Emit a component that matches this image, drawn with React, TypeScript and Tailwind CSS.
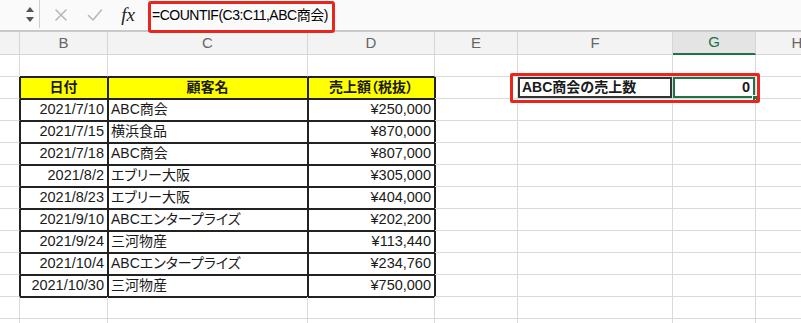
import React from "react";

const W = [
  "w-[20px]",
  "w-[88px]",
  "w-[200px]",
  "w-[127px]",
  "w-[83px]",
  "w-[155px]",
  "w-[83px]",
  "w-[83px]",
];

const LETTERS = ["", "B", "C", "D", "E", "F", "G", "H"];

const HEAD = ["日付", "顧客名", "売上額（税抜）"];

const DATA: [string, string, string][] = [
  ["2021/7/10", "ABC商会", "¥250,000"],
  ["2021/7/15", "横浜食品", "¥870,000"],
  ["2021/7/18", "ABC商会", "¥807,000"],
  ["2021/8/2", "エブリー大阪", "¥305,000"],
  ["2021/8/23", "エブリー大阪", "¥404,000"],
  ["2021/9/10", "ABCエンタープライズ", "¥202,200"],
  ["2021/9/24", "三河物産", "¥113,440"],
  ["2021/10/4", "ABCエンタープライズ", "¥234,760"],
  ["2021/10/30", "三河物産", "¥750,000"],
];

function cellClass(r: number, c: number): string {
  const parts: string[] = [
    W[c],
    "h-full shrink-0 border-r border-b flex items-center overflow-hidden whitespace-nowrap",
  ];
  const inTableRow = r >= 2 && r <= 11;
  const rightBlack = inTableRow && c >= 0 && c <= 3;
  const bottomBlack = r >= 1 && r <= 11 && c >= 1 && c <= 3;
  parts.push(rightBlack ? "border-r-[#222]" : "border-r-[#dadada]");
  parts.push(bottomBlack ? "border-b-[#222]" : "border-b-[#dadada]");
  if (inTableRow && c >= 1 && c <= 3) parts.push("shadow-[inset_1px_1px_0_0_#222]");
  if (inTableRow && c === 4) parts.push("shadow-[inset_1px_0_0_0_#222]");
  if (r === 12 && c >= 1 && c <= 3) parts.push("shadow-[inset_0_1px_0_0_#222]");
  return parts.join(" ");
}

function Row({ r }: { r: number }) {
  const cells: React.ReactNode[] = [];
  for (let c = 0; c < 8; c++) {
    let content: React.ReactNode = null;
    let extra = "";
    if (r === 2 && c >= 1 && c <= 3) {
      extra = "bg-[#ffff00] justify-center font-bold";
      content = HEAD[c - 1];
    } else if (r >= 3 && r <= 11 && c >= 1 && c <= 3) {
      const d = DATA[r - 3];
      if (c === 1) {
        extra = "justify-end pr-[3px] text-[14.5px]";
        content = d[0];
      } else if (c === 2) {
        extra = "justify-start pl-[3px]";
        content = d[1];
      } else {
        extra = "justify-end pr-[3px] text-[14.5px]";
        content = d[2];
      }
    }
    if (r === 2 && c === 5) {
      cells.push(
        <div
          key={c}
          className={`${W[c]} h-full shrink-0 border-r border-b border-r-[#dadada] border-b-[#dadada] flex items-center pl-[4px] font-bold shadow-[inset_0_0_0_2px_#333]`}
        >
          ABC商会の売上数
        </div>
      );
      continue;
    }
    if (r === 2 && c === 6) {
      cells.push(
        <div
          key={c}
          className={`${W[c]} relative h-full shrink-0 border-r border-b border-r-[#dadada] border-b-[#dadada] flex items-center justify-end pr-[5px] font-bold text-[14.5px] shadow-[inset_0_0_0_2px_#217346]`}
        >
          0
          <div className="absolute right-[-3px] bottom-[-3px] w-[6px] h-[6px] bg-[#217346] border border-white" />
        </div>
      );
      continue;
    }
    cells.push(
      <div key={c} className={`${cellClass(r, c)} ${extra}`}>
        {content}
      </div>
    );
  }
  return (
    <div className="relative flex h-[22px]">
      {cells}
      {r === 2 && (
        <div className="absolute z-10 left-[510px] top-[-4px] w-[250px] h-[30px] border-[3px] border-[#e8261e] rounded-[2px]" />
      )}
    </div>
  );
}

export default function App() {
  const rows = [];
  for (let r = 1; r <= 13; r++) rows.push(<Row key={r} r={r} />);
  return (
    <div className="w-[801px] h-[323px] overflow-hidden bg-white text-[14px] text-[#1a1a1a] font-['Liberation_Sans','Noto_Sans_CJK_JP',sans-serif] [font-feature-settings:'palt']">
      {/* Formula bar */}
      <div className="relative flex items-center h-[32px] bg-[#fafafa] border-b-2 border-[#c8c8c8]">
        <div className="w-[40px] h-[28px] self-start flex items-center justify-end pr-[4px] border-r border-[#cfcfcf]">
          <svg width="10" height="22" viewBox="0 0 10 22">
            <path d="M5 4 L9 9 L1 9 Z" fill="#555" />
            <path d="M5 19 L9 14 L1 14 Z" fill="#555" />
          </svg>
        </div>
        <div className="w-[42px] flex justify-center">
          <svg width="14" height="14" viewBox="0 0 14 14">
            <path d="M2 2 L12 12 M12 2 L2 12" stroke="#b8b8b8" strokeWidth="1.6" strokeLinecap="round" />
          </svg>
        </div>
        <div className="w-[26px] flex justify-center">
          <svg width="16" height="14" viewBox="0 0 16 14">
            <path d="M1.5 7.5 L6 12 L14.5 2" stroke="#b8b8b8" strokeWidth="1.6" fill="none" strokeLinecap="round" strokeLinejoin="round" />
          </svg>
        </div>
        <div className="w-[40px] flex justify-center font-['Liberation_Serif',serif] italic text-[19px] text-[#222]">
          fx
        </div>
        <div className="pl-[4px] text-[14px] tracking-[-0.5px] text-black">=COUNTIF(C3:C11,ABC商会)</div>
        <div className="absolute z-10 left-[148px] top-[1px] w-[187px] h-[32px] border-[3px] border-[#e8261e] rounded-[3px]" />
      </div>
      {/* Column headers */}
      <div className="flex h-[23px] bg-[#f3f3f3]">
        {LETTERS.map((l, i) => (
          <div
            key={i}
            className={`${W[i]} h-full shrink-0 border-r border-b border-r-[#d6d6d6] flex items-center justify-center text-[15px] overflow-hidden ${
              l === "G"
                ? "bg-[#e4e4e4] text-[#217346] border-b-2 border-b-[#217346]"
                : "text-[#666] border-b-[#d6d6d6]"
            }`}
          >
            {l}
          </div>
        ))}
      </div>
      {rows}
    </div>
  );
}
